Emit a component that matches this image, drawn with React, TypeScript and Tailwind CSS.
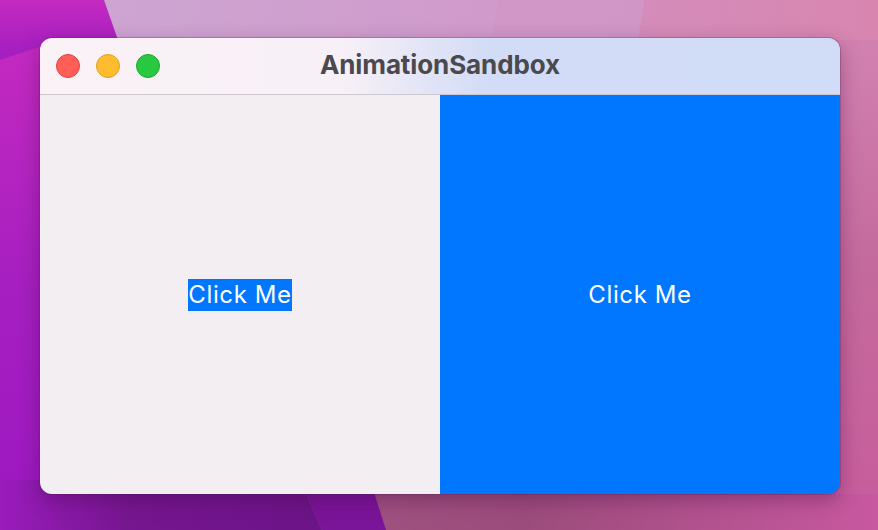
import React from "react";

function Wallpaper() {
  return (
    <svg className="absolute inset-0" width="878" height="530" viewBox="0 0 878 530">
      <defs>
        <linearGradient id="lft" x1="0" y1="0" x2="0" y2="1">
          <stop offset="0" stopColor="#c42ac0" />
          <stop offset="0.5" stopColor="#a61fc0" />
          <stop offset="1" stopColor="#9c18c0" />
        </linearGradient>
        <linearGradient id="top" x1="0" y1="0" x2="1" y2="0">
          <stop offset="0" stopColor="#cca8d4" />
          <stop offset="0.5" stopColor="#d09ccc" />
          <stop offset="1" stopColor="#d396c6" />
        </linearGradient>
        <linearGradient id="pnk" x1="0" y1="0" x2="1" y2="0">
          <stop offset="0" stopColor="#d48cba" />
          <stop offset="1" stopColor="#d886b0" />
        </linearGradient>
        <linearGradient id="rgt" x1="0" y1="0" x2="0" y2="1">
          <stop offset="0" stopColor="#d486b4" />
          <stop offset="0.5" stopColor="#c46a9c" />
          <stop offset="1" stopColor="#c85c9c" />
        </linearGradient>
        <linearGradient id="btm" x1="0" y1="0" x2="1" y2="0">
          <stop offset="0" stopColor="#a65c88" />
          <stop offset="0.6" stopColor="#9c4c7c" />
          <stop offset="1" stopColor="#c858a0" />
        </linearGradient>
        <linearGradient id="bpl" x1="0" y1="0" x2="1" y2="0">
          <stop offset="0" stopColor="#9a1cbc" />
          <stop offset="0.4" stopColor="#761690" />
          <stop offset="1" stopColor="#6c1488" />
        </linearGradient>
      </defs>
      <rect x="0" y="0" width="878" height="530" fill="url(#rgt)" />
      <polygon points="0,0 878,0 878,40 0,40" fill="url(#top)" />
      <polygon points="498,0 878,0 878,40 492,40" fill="#d096c6" opacity="0.8" />
      <polygon points="644,0 878,0 878,40 638,40" fill="url(#pnk)" />
      <polygon points="0,0 104,0 125,60 0,100" fill="url(#lft)" />
      <polygon points="0,60 60,40 60,530 0,530" fill="url(#lft)" />
      <polygon points="0,494 878,494 878,530 0,530" fill="url(#btm)" />
      <polygon points="0,480 300,480 322,530 0,530" fill="url(#bpl)" />
      <polygon points="300,480 370,480 386,530 322,530" fill="#7a1498" />
    </svg>
  );
}

export default function App() {
  return (
    <div className="relative w-[878px] h-[530px] overflow-hidden" style={{ fontFamily: "Inter, 'Noto Sans', sans-serif" }}>
      <Wallpaper />
      <div className="relative pt-[38px] pl-[40px]">
        <div className="w-[800px] h-[456px] rounded-[12px] overflow-hidden flex flex-col shadow-[0_6px_20px_rgba(60,0,60,0.35),0_0_0_1px_rgba(80,40,90,0.25)]">
          <div className="relative h-[57px] shrink-0 flex items-center border-b border-[#cdc8cf] bg-[linear-gradient(90deg,#faf2f6_0%,#f7f0f6_38%,#d3dcf6_56%,#d1dcf7_100%)]">
            <div className="flex items-center gap-[16px] pl-[16px]">
              <span className="w-[24px] h-[24px] rounded-full bg-[#ff5f57] border border-[#e0443e]" />
              <span className="w-[24px] h-[24px] rounded-full bg-[#febc2e] border border-[#dea123]" />
              <span className="w-[24px] h-[24px] rounded-full bg-[#28c840] border border-[#1aab29]" />
            </div>
            <div className="absolute inset-0 pb-[4px] flex items-center justify-center text-[26px] font-bold text-[#4a494e] tracking-[-0.1px]">
              AnimationSandbox
            </div>
          </div>
          <div className="flex-1 flex">
            <div className="flex-1 bg-[#f3eef2] flex items-center justify-center">
              <span className="bg-[#0077fe] text-white text-[24px] leading-[32px] tracking-[0.6px]">Click Me</span>
            </div>
            <div className="flex-1 bg-[#0077fe] flex items-center justify-center">
              <span className="text-white text-[24px] leading-[32px] tracking-[0.6px]">Click Me</span>
            </div>
          </div>
        </div>
      </div>
    </div>
  );
}
